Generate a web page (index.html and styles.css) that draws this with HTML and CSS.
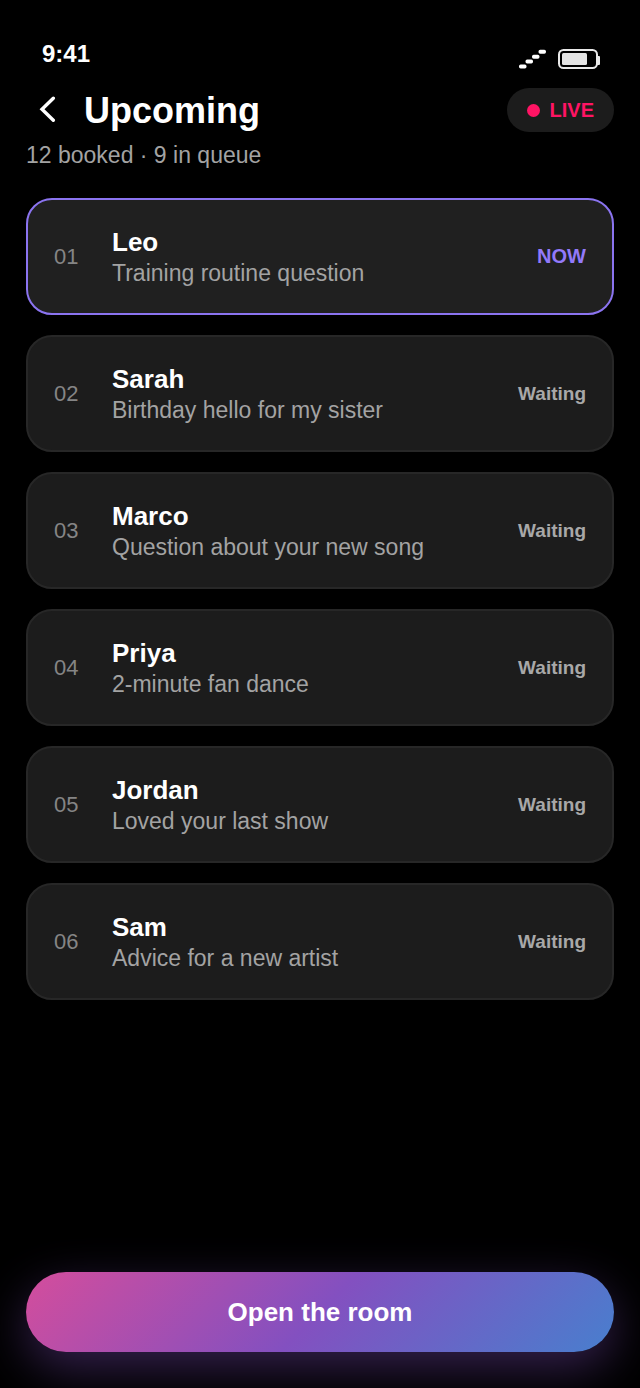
FILE: index.html
```
<!DOCTYPE html>
<html lang="en">
<head>
    <meta charset="UTF-8">
    <meta name="viewport" content="width=device-width, initial-scale=1.0">
    <title>Upcoming</title>
    <link rel="stylesheet" href="styles.css">
</head>
<body>
    <div class="status-bar">
        <span class="time">9:41</span>
        <div class="status-icons">
            <svg class="signal" width="28" height="20" viewBox="0 0 28 20" fill="#fff">
                <rect x="1" y="15.5" width="7.5" height="4" rx="1.7"/>
                <rect x="7.5" y="10.5" width="7.5" height="4" rx="1.7"/>
                <rect x="14" y="5.7" width="7.5" height="4" rx="1.7"/>
                <rect x="20.5" y="0.7" width="7.5" height="4" rx="1.7"/>
            </svg>
            <svg class="battery" width="43" height="20" viewBox="0 0 43 20">
                <rect x="1" y="1" width="38" height="18" rx="4.5" fill="none" stroke="#e9e9e9" stroke-width="2"/>
                <rect x="4" y="4" width="25" height="12" rx="1.5" fill="#e4e4e4"/>
                <path d="M39 7h2q1 0 1 1v7q0 1-1 1h-2z" fill="#e9e9e9"/>
            </svg>
        </div>
    </div>

    <header class="header">
        <button type="button" class="back" aria-label="Back">
            <svg width="18" height="28" viewBox="0 0 18 28" fill="none" stroke="#fff" stroke-width="3.4" stroke-linecap="round" stroke-linejoin="miter">
                <path d="M14.3 2.2L3 13.2L14.3 24.2"/>
            </svg>
        </button>
        <h1>Upcoming</h1>
        <span class="live"><span class="dot"></span>LIVE</span>
    </header>
    <p class="summary">12 booked · 9 in queue</p>

    <ol class="queue">
        <li class="card now">
            <span class="number">01</span>
            <div class="info">
                <h2>Leo</h2>
                <p>Training routine question</p>
            </div>
            <span class="state">NOW</span>
        </li>
        <li class="card">
            <span class="number">02</span>
            <div class="info">
                <h2>Sarah</h2>
                <p>Birthday hello for my sister</p>
            </div>
            <span class="state">Waiting</span>
        </li>
        <li class="card">
            <span class="number">03</span>
            <div class="info">
                <h2>Marco</h2>
                <p>Question about your new song</p>
            </div>
            <span class="state">Waiting</span>
        </li>
        <li class="card">
            <span class="number">04</span>
            <div class="info">
                <h2>Priya</h2>
                <p>2-minute fan dance</p>
            </div>
            <span class="state">Waiting</span>
        </li>
        <li class="card">
            <span class="number">05</span>
            <div class="info">
                <h2>Jordan</h2>
                <p>Loved your last show</p>
            </div>
            <span class="state">Waiting</span>
        </li>
        <li class="card">
            <span class="number">06</span>
            <div class="info">
                <h2>Sam</h2>
                <p>Advice for a new artist</p>
            </div>
            <span class="state">Waiting</span>
        </li>
    </ol>

    <button type="button" class="open-room">Open the room</button>
</body>
</html>
```

FILE: styles.css
```
* {
    box-sizing: border-box;
    margin: 0;
    padding: 0;
}

body {
    display: flex;
    flex-direction: column;
    min-height: 100vh;
    padding: 40px 26px 36px;
    background-color: #000;
    color: #fff;
    font-family: "Liberation Sans", Arial, sans-serif;
}

button {
    border: none;
    color: #fff;
    font-family: inherit;
    cursor: pointer;
}

.status-bar {
    display: flex;
    justify-content: space-between;
    padding: 0 13px 0 16px;
}

.time {
    font-size: 24px;
    font-weight: bold;
    line-height: 28px;
}

.status-icons {
    display: flex;
    gap: 12px;
    padding-top: 9px;
}

.header {
    display: flex;
    align-items: center;
    margin-top: 19px;
}

.back {
    display: flex;
    justify-content: center;
    width: 44px;
    background: none;
}

h1 {
    flex: 1;
    padding: 2px 0 0 14px;
    font-size: 36px;
    line-height: 42px;
}

.live {
    display: flex;
    align-items: center;
    gap: 10px;
    padding: 10px 20px;
    border-radius: 22px;
    background-color: #1c1c1c;
    color: #ff1464;
    font-size: 20px;
    font-weight: bold;
    line-height: 24px;
}

.dot {
    width: 13px;
    height: 13px;
    border-radius: 50%;
    background-color: #ff1464;
}

.summary {
    margin-top: 9px;
    color: #a3a3a3;
    font-size: 23px;
    line-height: 28px;
}

.queue {
    display: flex;
    flex-direction: column;
    gap: 20px;
    margin-top: 29px;
    list-style: none;
}

.card {
    display: flex;
    align-items: center;
    padding: 24px 26px;
    border: 2px solid #272727;
    border-radius: 26px;
    background-color: #1c1c1c;
}

.card.now {
    border-color: #8b74f0;
    background-color: #202020;
}

.number {
    width: 58px;
    color: #858585;
    font-size: 22px;
}

.info {
    flex: 1;
    padding-top: 2px;
}

h2 {
    font-size: 26px;
    line-height: 32px;
}

.info p {
    color: #a3a3a3;
    font-size: 23px;
    line-height: 31px;
    padding-top: 0;
}

.state {
    color: #a8a8a8;
    font-size: 19px;
    font-weight: bold;
}

.now .state {
    color: #9279fa;
    font-size: 20px;
}

.open-room {
    height: 80px;
    margin-top: auto;
    border-radius: 40px;
    background: linear-gradient(135deg, #d44d9c 0%, #8350c0 50%, #487fce 100%);
    box-shadow: 0 16px 48px rgba(131, 80, 192, 0.4);
    font-size: 26px;
    font-weight: bold;
}
```
